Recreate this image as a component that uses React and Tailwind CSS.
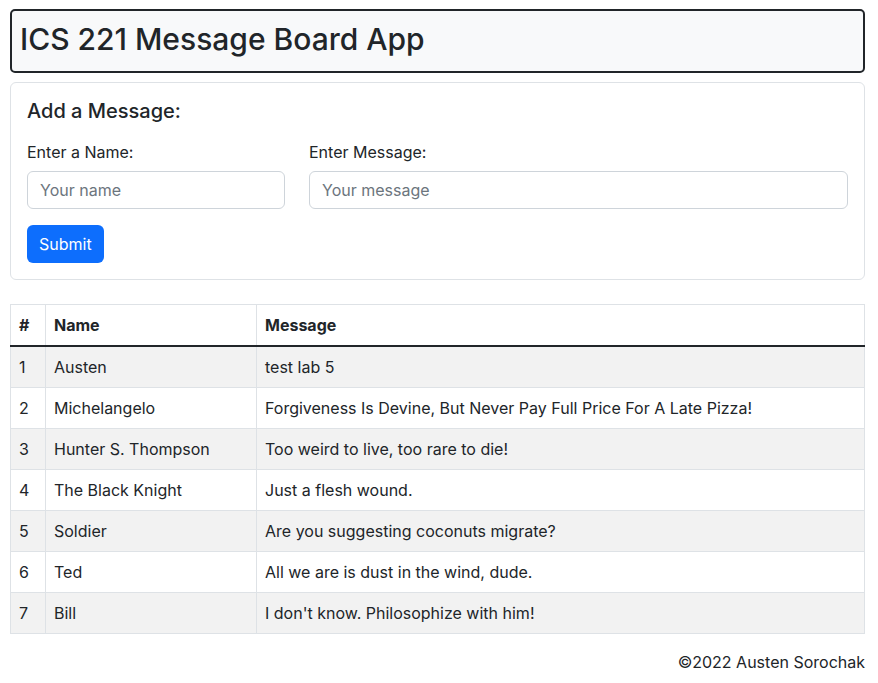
import React from 'react';

const messages = [
	{ id: 1, name: 'Austen', msg: 'test lab 5' },
	{ id: 2, name: 'Michelangelo', msg: 'Forgiveness Is Devine, But Never Pay Full Price For A Late Pizza!' },
	{ id: 3, name: 'Hunter S. Thompson', msg: 'Too weird to live, too rare to die!' },
	{ id: 4, name: 'The Black Knight', msg: 'Just a flesh wound.' },
	{ id: 5, name: 'Soldier', msg: 'Are you suggesting coconuts migrate?' },
	{ id: 6, name: 'Ted', msg: 'All we are is dust in the wind, dude.' },
	{ id: 7, name: 'Bill', msg: "I don't know. Philosophize with him!" },
];

export default function App() {
	const [name, setName] = React.useState('');
	const [msg, setMsg] = React.useState('');

	return (
		<div className="min-h-screen bg-white text-[#212529] font-['Inter',sans-serif] text-base leading-6">
			<div className="ml-[10px] w-[855px] pt-[9px]">
				<div className="h-[64px] flex items-center px-2 pb-[5px] border-2 border-[#212529] rounded-[5px] bg-[#f8f9fa]">
					<h1 className="text-[30px] leading-[38px] font-medium">ICS 221 Message Board App</h1>
				</div>

				<div className="mt-[9px] border border-[#dee2e6] rounded-md p-4">
					<h5 className="text-[20px] leading-6 font-medium mb-[17px]">Add a Message:</h5>
					<div className="grid grid-cols-[258px_1fr] gap-x-6">
						<div>
							<label className="block mb-[7px]">Enter a Name:</label>
							<input
								className="w-full h-[38px] px-3 border border-[#ced4da] rounded-md placeholder:text-[#6c757d] outline-none"
								placeholder="Your name"
								value={name}
								onChange={(e) => setName(e.target.value)}
							/>
						</div>
						<div>
							<label className="block mb-[7px]">Enter Message:</label>
							<input
								className="w-full h-[38px] px-3 border border-[#ced4da] rounded-md placeholder:text-[#6c757d] outline-none"
								placeholder="Your message"
								value={msg}
								onChange={(e) => setMsg(e.target.value)}
							/>
						</div>
					</div>
					<button className="mt-4 h-[38px] px-3 bg-[#0d6efd] text-white rounded-md">Submit</button>
				</div>

				<table className="mt-6 w-full border-collapse border border-[#dee2e6]">
					<thead>
						<tr className="border-b-2 border-[#212529] text-left">
							<th className="w-[35px] px-2 py-2 border-r border-[#dee2e6] font-bold">#</th>
							<th className="w-[211px] px-2 py-2 border-r border-[#dee2e6] font-bold">Name</th>
							<th className="px-2 py-2 font-bold">Message</th>
						</tr>
					</thead>
					<tbody>
						{messages.map((m, i) => (
							<tr key={m.id} className={'border-b border-[#dee2e6] ' + (i % 2 === 0 ? 'bg-[#f2f2f2]' : 'bg-white')}>
								<td className="px-2 py-2 border-r border-[#dee2e6]">{m.id}</td>
								<td className="px-2 py-2 border-r border-[#dee2e6]">{m.name}</td>
								<td className="px-2 py-2">{m.msg}</td>
							</tr>
						))}
					</tbody>
				</table>

				<footer className="mt-4 text-right">©2022 Austen Sorochak</footer>
			</div>
		</div>
	);
}
